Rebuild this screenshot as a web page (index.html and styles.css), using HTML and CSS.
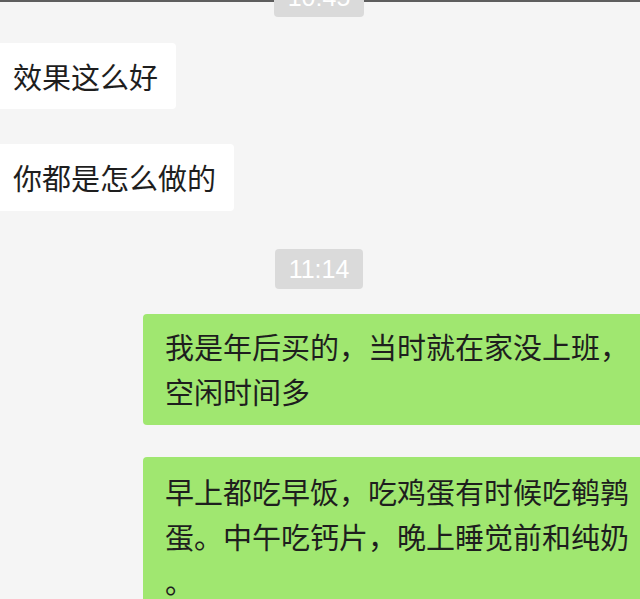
FILE: index.html
```html
<!DOCTYPE html>
<html lang="zh-CN">
<head>
    <meta charset="UTF-8">
    <meta name="viewport" content="width=device-width, initial-scale=1.0">
    <title>聊天</title>
    <link rel="stylesheet" href="styles.css">
</head>
<body>

<div class="chat">
    <div class="time time-top">10:45</div>

    <div class="msg msg-left">效果这么好</div>
    <div class="msg msg-left">你都是怎么做的</div>

    <div class="time">11:14</div>

    <div class="msg msg-right">我是年后买的，当时就在家没上班，<br>空闲时间多</div>
    <div class="msg msg-right msg-last">早上都吃早饭，吃鸡蛋有时候吃鹌鹑<br>蛋。中午吃钙片，晚上睡觉前和纯奶<br>。</div>
</div>

</body>
</html>
```

FILE: styles.css
```css
html, body {
    margin: 0;
    padding: 0;
    height: 100%;
    overflow: hidden;
}
body {
    background-color: #f5f5f5;
    font-family: "Noto Sans CJK SC", "Noto Sans", sans-serif;
    color: #1e1e1e;
}
.chat {
    display: flex;
    flex-direction: column;
    border-top: 2px solid #5e5e5e;
}
.time {
    align-self: center;
    margin-top: 38px;
    padding: 0 14px;
    height: 40px;
    line-height: 40px;
    background-color: #dadada;
    color: #fff;
    font-family: "Liberation Sans", Arial, sans-serif;
    font-size: 25px;
    border-radius: 4px;
    transform: translateX(-1px);
}
.time-top {
    margin-top: -25px;
}
.msg {
    margin-top: 34px;
    font-size: 29px;
    border-radius: 4px;
    white-space: nowrap;
}
.time + .msg {
    margin-top: 26px;
}
.time + .msg-right {
    margin-top: 25px;
}
.msg-left {
    align-self: flex-start;
    margin-left: -6px;
    padding: 14px 18px 14px 19px;
    line-height: 38px;
    background-color: #fff;
}
.msg-left + .msg-left {
    margin-top: 35px;
    padding-bottom: 15px;
}
.msg-right {
    margin-left: 143px;
    margin-right: -20px;
    padding: 10px 0 11px 22px;
    line-height: 45px;
    background-color: #a0e770;
}
.msg-right + .msg-right {
    margin-top: 32px;
    padding-top: 12px;
}
```
